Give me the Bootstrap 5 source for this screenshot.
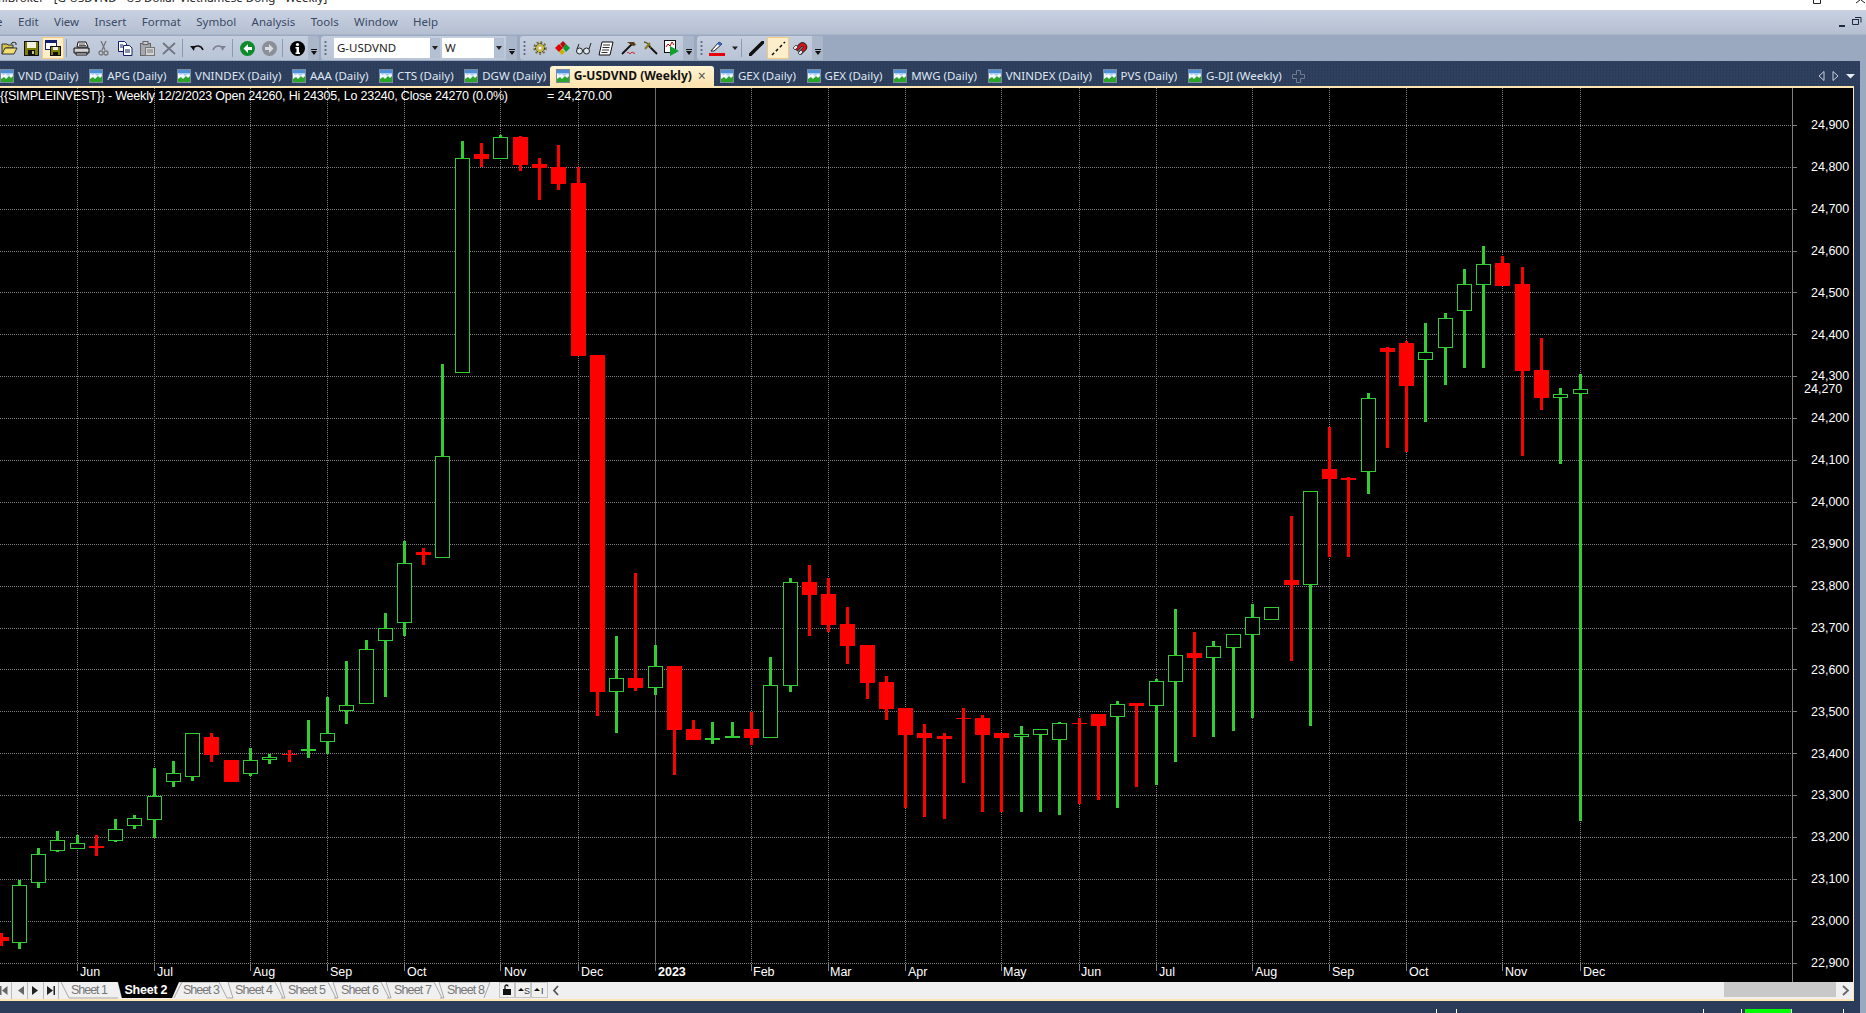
<!DOCTYPE html>
<html lang="en">
<head>
<meta charset="utf-8">
<title>AmiBroker - G-USDVND</title>
<link href="https://cdn.jsdelivr.net/npm/bootstrap@5.3.0/dist/css/bootstrap.min.css" rel="stylesheet">
<style>
html,body{height:1013px;margin:0;background:#9ba9c0;overflow:hidden}
.ab-app{width:1866px;height:1013px;overflow:hidden;position:relative;font-family:"Noto Sans","Liberation Sans",sans-serif;font-size:11.5px;line-height:1}
.ab-title{height:10px;background:#fff;overflow:hidden;position:relative;color:#222;font-size:11.5px;white-space:nowrap}
.ab-title-text{margin-top:-8px;margin-left:-6px}
.ab-title-gap{margin:0 3px}
.ab-winbtn{position:absolute;top:0;left:1806px}
.ab-menu{height:25px;background:linear-gradient(#c8d2e1,#b5bfd2);color:#3a4a66;border-bottom:1px solid #a9b5c9;font-size:11.5px}
.ab-menu-item{margin-right:15.400px}
.ab-menu-first{width:18px;overflow:hidden;flex:none;text-indent:-16px;white-space:nowrap}
.ab-tools{height:26px;background:#9ba9c0;padding-top:1px}
.ab-bar{height:24px;background:linear-gradient(#c4cede,#b9c4d6);border-radius:3px;margin-right:3px}
.ab-bar-a{width:320px;margin-left:-2px}
.ab-bar-b{width:196px}
.ab-bar-c{width:174px}
.ab-bar-d{width:126px;margin-right:0}
.ab-btn{width:22px;height:22px;flex:none;border:1px solid transparent}
.ab-btn-on{background:#fdeecb;border-color:#f2c983}
.ab-sep{width:6px;flex:none;position:relative;height:20px}
.ab-sep::after{content:"";position:absolute;left:2px;top:1px;bottom:1px;width:1px;background:#8c99b0}
.ab-grip{width:9px;flex:none;height:16px;background:radial-gradient(circle,#5d6b85 1px,transparent 1.2px) center top/3px 4px repeat-y}
.ab-cap{width:11px;height:24px;background:#aab6ca;border-radius:0 3px 3px 0;flex:none;position:relative;margin-left:auto}
.ab-cap::before{content:"";position:absolute;left:3px;bottom:10px;width:6px;border-top:1px solid #111}
.ab-cap::after{content:"";position:absolute;left:3px;bottom:5px;border:3px solid transparent;border-top:4px solid #111;border-bottom:0}
.ab-combo{background:#fff;height:20px;color:#222;font-size:11.5px;flex:none;padding-left:3px}
.ab-combo-sym{width:96px}
.ab-combo-per{width:52px}
.ab-drop{width:10px;height:20px;flex:none;background:#b3bfd2;position:relative;margin-right:2px}
.ab-drop::after{content:"";position:absolute;left:2px;top:8px;border:3px solid transparent;border-top:4px solid #222;border-bottom:0}
.ab-work{width:1860px;background:#2b3c5a}
.ab-side{width:6px;background:#9ba9c0}
.ab-tabs{height:25px;background:#2d3f5e repeating-conic-gradient(#2b3c5a 0 25%,#30425f 0 50%) 0 0/3px 3px;color:#dfe6f2}
.ab-tab{margin-right:10.600px;height:20px;margin-top:5px;white-space:nowrap}
.ab-tab svg{margin-right:4px;flex:none}
.ab-tab-on{background:linear-gradient(#fff4d6,#fde3ae);color:#111;font-weight:700;font-size:12px;border-radius:3px 3px 0 0;padding:0 8px 0 6px;margin-left:-7px;margin-right:6px;height:20px}
.ab-tab-x{color:#555;margin-left:6px;font-weight:400;font-size:14px}
.ab-tabnav{margin-left:auto;margin-right:5px;margin-top:5px;gap:7px}
.ab-window{width:1854px;border-top:2px solid #fde6b4;border-right:1px solid #fde6b4;border-bottom:2px solid #fde6b4;background:#000}
.ab-chart{display:block}
.ab-strip{height:17px;background:#f0f0f0}
.ab-strip svg{display:block}
.ab-thumb{width:112px;height:15px;background:#c8c8c8;margin-left:auto;margin-right:2px}
.ab-arrow{width:15px;color:#666;flex:none}
.ab-status{height:12px;display:block}
.ab-defs{top:0;left:0}
svg text{font-family:"Liberation Sans",Arial,sans-serif}
</style>
</head>
<body>
<div class="ab-app d-flex flex-column">

  <svg width="0" height="0" class="ab-defs position-absolute" aria-hidden="true">
    <symbol id="abIco" viewBox="0 0 14 14">
      <rect x=".5" y=".5" width="13" height="13" fill="#f2f7fc" stroke="#7d8ba0"/>
      <rect x="1" y="1" width="12" height="3" fill="#4f8fd8"/>
      <path d="M1 4l2 2 3-1 2 2 3-2 2 1V4z" fill="#a9cdf0"/>
      <path d="M1 13v-3l3-2 2 2 3-3 2 2 2-2v6z" fill="#2aa52a"/>
    </symbol>
  </svg>

  <div class="ab-title">
    <div class="ab-title-text">miBroker<span class="ab-title-gap">-</span>[G-USDVND - US Dollar Vietnamese Dong - Weekly]</div>
    <svg class="ab-winbtn" width="60" height="10" aria-hidden="true"><path d="M7.500 0v3.500h7V0" fill="none" stroke="#222"/><path d="M50 3l4-3M59 3l-4-3" stroke="#222" fill="none"/></svg>
  </div>

  <nav class="ab-menu d-flex align-items-center">
    <span class="ab-menu-first">File</span>
    <span class="ab-menu-item">Edit</span>
    <span class="ab-menu-item">View</span>
    <span class="ab-menu-item">Insert</span>
    <span class="ab-menu-item">Format</span>
    <span class="ab-menu-item">Symbol</span>
    <span class="ab-menu-item">Analysis</span>
    <span class="ab-menu-item">Tools</span>
    <span class="ab-menu-item">Window</span>
    <span class="ab-menu-item">Help</span>
    <svg class="ms-auto me-1" width="24" height="14" aria-hidden="true"><rect x="1" y="10" width="6" height="2" fill="#1d2a44"/><path d="M14.500 4.500h6v5h-6zM17 2.500h6v5" fill="none" stroke="#1d2a44"/><path d="M14 4.500h7M17 2.500h6" stroke="#1d2a44"/></svg>
  </nav>

  <div class="ab-tools d-flex">
    <div class="ab-bar ab-bar-a d-flex align-items-center">
      <span class="ab-btn d-flex align-items-center justify-content-center"><svg width="17" height="15" viewBox="0 0 17 15"><path d="M1 3h5l1 1h5v3H5L1 13z" fill="#d9c34a" stroke="#333"/><path d="M1 13l3-6h12l-3 6z" fill="#f1df72" stroke="#333"/><path d="M10 3c1-2 3-2 5-1M15 2v2" stroke="#222" fill="none"/></svg></span>
      <span class="ab-btn d-flex align-items-center justify-content-center"><svg width="15" height="15" viewBox="0 0 15 15"><rect x=".5" y=".5" width="14" height="14" fill="#808000" stroke="#111"/><rect x="3" y="1" width="9" height="6" fill="#f1f1e4"/><rect x="4" y="9" width="7" height="5" fill="#111"/><rect x="8" y="10" width="2" height="3" fill="#c9c98a"/></svg></span>
      <span class="ab-btn ab-btn-on d-flex align-items-center justify-content-center"><svg width="16" height="16" viewBox="0 0 16 16"><rect x=".5" y=".5" width="11" height="9" fill="#fff" stroke="#12206b"/><rect x="1" y="1" width="10" height="2" fill="#12206b"/><rect x="5.500" y="6.500" width="10" height="9" fill="#808000" stroke="#111"/><rect x="8" y="7" width="5" height="3" fill="#eee"/><rect x="8" y="12" width="5" height="3" fill="#111"/></svg></span>
      <span class="ab-sep"></span>
      <span class="ab-btn d-flex align-items-center justify-content-center"><svg width="17" height="15" viewBox="0 0 17 15"><path d="M5 1h8l2 5H4z" fill="#fff" stroke="#111"/><path d="M6 3h6M6 4.500h7" stroke="#555"/><path d="M1 7h15v5H1z" fill="#b9b9b9" stroke="#111"/><path d="M3 12h11v2H3z" fill="#fff" stroke="#111"/><path d="M2 9h13" stroke="#eee"/></svg></span>
      <span class="ab-btn d-flex align-items-center justify-content-center"><svg width="11" height="15" viewBox="0 0 11 15"><path d="M3 0l4 9M8 0L4 9" stroke="#777" fill="none" stroke-width="1.300"/><circle cx="3" cy="12" r="2" fill="none" stroke="#777" stroke-width="1.300"/><circle cx="8" cy="12" r="2" fill="none" stroke="#777" stroke-width="1.300"/></svg></span>
      <span class="ab-btn d-flex align-items-center justify-content-center"><svg width="16" height="15" viewBox="0 0 16 15"><path d="M1.500.5h6l2 2v8h-8z" fill="#fff" stroke="#12206b"/><path d="M6.500 4.500h6l2.500 2.500v7.500H6.500z" fill="#fff" stroke="#12206b"/><path d="M8 9h5M8 11h5M3 4h3M3 6h3" stroke="#12206b"/></svg></span>
      <span class="ab-btn d-flex align-items-center justify-content-center"><svg width="16" height="15" viewBox="0 0 16 15"><rect x="1.500" y="2.500" width="10" height="12" fill="#a5a9ad" stroke="#666"/><rect x="4" y=".5" width="5" height="3" fill="#c9c9c9" stroke="#666"/><rect x="6.500" y="6.500" width="9" height="8" fill="#d2d4d8" stroke="#777"/><path d="M8 9h6M8 11h6" stroke="#777"/></svg></span>
      <span class="ab-btn d-flex align-items-center justify-content-center"><svg width="14" height="13" viewBox="0 0 14 13"><path d="M1 1l12 11M13 1L1 12" stroke="#707682" stroke-width="1.800"/></svg></span>
      <span class="ab-sep"></span>
      <span class="ab-btn d-flex align-items-center justify-content-center"><svg width="14" height="10" viewBox="0 0 14 10"><path d="M3 5c3-3 8-3 10 2" fill="none" stroke="#111" stroke-width="1.600"/><path d="M0 3l5 0-1 5z" fill="#111"/></svg></span>
      <span class="ab-btn d-flex align-items-center justify-content-center"><svg width="14" height="10" viewBox="0 0 14 10"><path d="M11 5C8 2 3 2 1 7" fill="none" stroke="#7b8190" stroke-width="1.600"/><path d="M14 3l-5 0 1 5z" fill="#7b8190"/></svg></span>
      <span class="ab-sep"></span>
      <span class="ab-btn d-flex align-items-center justify-content-center"><svg width="15" height="15" viewBox="0 0 15 15"><circle cx="7.500" cy="7.500" r="7.500" fill="#0d8a2a"/><path d="M8 3L3.500 7.500 8 12V9h4V6H8z" fill="#fff"/></svg></span>
      <span class="ab-btn d-flex align-items-center justify-content-center"><svg width="15" height="15" viewBox="0 0 15 15"><circle cx="7.500" cy="7.500" r="7.500" fill="#8a8f98"/><path d="M7 3l4.500 4.500L7 12V9H3V6h4z" fill="#d8dce3"/></svg></span>
      <span class="ab-sep"></span>
      <span class="ab-btn d-flex align-items-center justify-content-center"><svg width="15" height="15" viewBox="0 0 15 15"><circle cx="7.500" cy="7.500" r="7.500" fill="#000"/><circle cx="7.500" cy="3.500" r="1.600" fill="#fff"/><path d="M5.500 6h3.500v5.500h1V13H5.500v-1.500h1V7.500h-1z" fill="#fff"/></svg></span>
      <span class="ab-cap"></span>
    </div>

    <div class="ab-bar ab-bar-b d-flex align-items-center">
      <span class="ab-grip"></span>
      <span class="ab-combo ab-combo-sym d-flex align-items-center ms-1">G-USDVND</span>
      <span class="ab-drop"></span>
      <span class="ab-combo ab-combo-per d-flex align-items-center">W</span>
      <span class="ab-drop"></span>
      <span class="ab-cap"></span>
    </div>

    <div class="ab-bar ab-bar-c d-flex align-items-center">
      <span class="ab-grip"></span>
      <span class="ab-btn d-flex align-items-center justify-content-center"><svg width="14" height="14" viewBox="0 0 14 14"><circle cx="7" cy="7" r="4.500" fill="#c7b94a" stroke="#222" stroke-dasharray="2 1"/><circle cx="7" cy="7" r="6" fill="none" stroke="#6d6a23" stroke-dasharray="2 2" stroke-width="1.500"/><circle cx="7" cy="7" r="1.500" fill="#fff"/></svg></span>
      <span class="ab-btn d-flex align-items-center justify-content-center"><svg width="15" height="14" viewBox="0 0 15 14"><path d="M4 3l4 4-4 4-4-4z" fill="#e00000"/><path d="M8 0l3 3-3 4-3-4z" fill="#b01010"/><path d="M11 3l4 4-4 4-3-4z" fill="#0b9a2c"/><path d="M7 8l3 3-3 3-3-3z" fill="#c9b300"/></svg></span>
      <span class="ab-btn d-flex align-items-center justify-content-center"><svg width="16" height="13" viewBox="0 0 16 13"><circle cx="3.500" cy="9" r="3" fill="#dfe7f0" stroke="#222"/><circle cx="10.500" cy="9" r="3" fill="#dfe7f0" stroke="#222"/><path d="M6.500 8.500c1-1 1-1 1-1M1 7l2-5M13 7l2-6" stroke="#222" fill="none"/></svg></span>
      <span class="ab-btn d-flex align-items-center justify-content-center"><svg width="16" height="15" viewBox="0 0 16 15"><path d="M4 1h11l-3 13H1z" fill="#fff" stroke="#111"/><path d="M5 4h7M4.500 6.500h7M4 9h7M3.500 11.500h6" stroke="#333"/></svg></span>
      <span class="ab-btn d-flex align-items-center justify-content-center"><svg width="16" height="15" viewBox="0 0 16 15"><path d="M12 3L2 13" stroke="#111" stroke-width="1.800"/><path d="M7 1h7l2 3-3 1z" fill="#5a3a12"/><path d="M7 12c2-2 2 2 4 0s2 1 4 0" stroke="#d00000" fill="none"/></svg></span>
      <span class="ab-btn d-flex align-items-center justify-content-center"><svg width="15" height="14" viewBox="0 0 15 14"><path d="M5 4l9 9" stroke="#111" stroke-width="1.800"/><path d="M1 1c3 0 6 3 7 6L6 3z" fill="#8a7a20" stroke="#5b5212"/><path d="M2 8l5-6" stroke="#8a7a20" stroke-width="2"/></svg></span>
      <span class="ab-btn d-flex align-items-center justify-content-center"><svg width="16" height="16" viewBox="0 0 16 16"><rect x=".5" y=".5" width="11" height="12" fill="#fff" stroke="#111"/><path d="M2 7l2-3 2 2 2-4 2 3" fill="none" stroke="#c00"/><path d="M6 6l9 5-9 5z" fill="#12a02e"/></svg></span>
      <span class="ab-cap"></span>
    </div>

    <div class="ab-bar ab-bar-d d-flex align-items-center">
      <span class="ab-grip"></span>
      <span class="ab-btn d-flex align-items-center justify-content-center"><svg width="16" height="15" viewBox="0 0 16 15"><path d="M2 10L10 1l3 2-8 7z" fill="#fff" stroke="#222"/><path d="M10 1l3 2-2 2-3-2z" fill="#3a6bd0"/><rect y="12" width="16" height="3" fill="#e8000d"/></svg></span>
      <span class="d-flex align-items-center ps-1"><svg width="7" height="5"><path d="M0 .5h6L3 4z" fill="#222"/></svg></span>
      <span class="ab-sep"></span>
      <span class="ab-btn d-flex align-items-center justify-content-center"><svg width="15" height="15" viewBox="0 0 15 15"><path d="M1 14L14 1" stroke="#111" stroke-width="3.400" stroke-linecap="round"/></svg></span>
      <span class="ab-btn ab-btn-on d-flex align-items-center justify-content-center"><svg width="15" height="15" viewBox="0 0 15 15"><path d="M1 14L14 1" stroke="#111" stroke-width="1.500" stroke-dasharray="3 2.500"/></svg></span>
      <span class="ab-btn d-flex align-items-center justify-content-center"><svg width="16" height="16" viewBox="0 0 16 16"><path d="M4 10l5-5a2.500 2.500 0 0 1 3.500 3.500L7.500 13.500" fill="none" stroke="#222" stroke-width="4.400"/><path d="M4.500 9.500L9 5a2.500 2.500 0 0 1 3.500 3.500L8 13" fill="none" stroke="#d0141c" stroke-width="2.800"/><path d="M1 8l3-3 2 2-3 3zM6 13l3-3 2 2-3 3z" fill="#e6e6e6" stroke="#222" stroke-width=".7"/></svg></span>
      <span class="ab-cap"></span>
    </div>
  </div>

  <div class="d-flex flex-grow-1">
    <main class="ab-work d-flex flex-column">
      <div class="ab-tabs d-flex">
        <span class="ab-tab d-flex align-items-center"><svg width="14" height="14"><use href="#abIco"/></svg>VND (Daily)</span>
        <span class="ab-tab d-flex align-items-center"><svg width="14" height="14"><use href="#abIco"/></svg>APG (Daily)</span>
        <span class="ab-tab d-flex align-items-center"><svg width="14" height="14"><use href="#abIco"/></svg>VNINDEX (Daily)</span>
        <span class="ab-tab d-flex align-items-center"><svg width="14" height="14"><use href="#abIco"/></svg>AAA (Daily)</span>
        <span class="ab-tab d-flex align-items-center"><svg width="14" height="14"><use href="#abIco"/></svg>CTS (Daily)</span>
        <span class="ab-tab d-flex align-items-center"><svg width="14" height="14"><use href="#abIco"/></svg>DGW (Daily)</span>
        <span class="ab-tab ab-tab-on d-flex align-items-center"><svg width="14" height="14"><use href="#abIco"/></svg>G-USDVND (Weekly)<span class="ab-tab-x">×</span></span>
        <span class="ab-tab d-flex align-items-center"><svg width="14" height="14"><use href="#abIco"/></svg>GEX (Daily)</span>
        <span class="ab-tab d-flex align-items-center"><svg width="14" height="14"><use href="#abIco"/></svg>GEX (Daily)</span>
        <span class="ab-tab d-flex align-items-center"><svg width="14" height="14"><use href="#abIco"/></svg>MWG (Daily)</span>
        <span class="ab-tab d-flex align-items-center"><svg width="14" height="14"><use href="#abIco"/></svg>VNINDEX (Daily)</span>
        <span class="ab-tab d-flex align-items-center"><svg width="14" height="14"><use href="#abIco"/></svg>PVS (Daily)</span>
        <span class="ab-tab d-flex align-items-center"><svg width="14" height="14"><use href="#abIco"/></svg>G-DJI (Weekly)</span>
        <span class="ab-tab d-flex align-items-center"><svg width="13" height="13" viewBox="0 0 13 13"><path d="M4.500.5h4v4h4v4h-4v4h-4v-4h-4v-4h4z" fill="none" stroke="#6f7b90"/></svg></span>
        <span class="ab-tabnav d-flex align-items-center">
          <svg width="7" height="10"><path d="M6 .5v9L1 5z" fill="none" stroke="#c5d0e2"/></svg>
          <svg width="7" height="10"><path d="M1 .5v9L6 5z" fill="none" stroke="#c5d0e2"/></svg>
          <svg width="9" height="6"><path d="M0 1h9L4.500 5.500z" fill="#e6ebf3"/></svg>
        </span>
      </div>

      <div class="ab-window d-flex flex-column">
        <svg class="ab-chart" id="abChart" width="1853" height="894" viewBox="0 88 1853 894" shape-rendering="crispEdges" role="img" aria-label="G-USDVND weekly candlestick chart"></svg>
        <div class="ab-strip d-flex align-items-start">
          <svg width="560" height="17" viewBox="0 0 560 17">
            <g fill="#222">
              <path d="M0 4h1.500v9H0zM7.500 4v9L2 8.500z" fill="#666"/>
              <path d="M24 4v9l-6-4.500z" fill="#666"/>
              <path d="M32 4v9l6-4.500z"/>
              <path d="M47 4v9l6-4.500zM53.500 4H55v9h-1.500z"/>
            </g>
            <path d="M11.500 0v17M27.500 0v17M43.500 0v17M58.500 0v17" stroke="#bbb"/>
            <g fill="none" stroke="#a8a8a8">
              <path d="M61 0l8 16h49M118 0l4 16"/>
              <path d="M178 0h41l8 16M174 16l8-16"/>
              <path d="M227 16h6l-5-16h47l8 16"/>
              <path d="M281 16h4l-5-16h48l8 16"/>
              <path d="M334 16h4l-5-16h48l8 16"/>
              <path d="M387 16h4l-5-16h48l8 16"/>
              <path d="M440 16h4l-5-16h51l-6 16"/>
            </g>
            <path d="M118 0h61l-7 16h-50z" fill="#000"/>
            <g font-size="12.500" fill="#777">
              <text x="71" y="12" textLength="37">Sheet 1</text>
              <text x="124.500" y="12" textLength="43" font-weight="700" fill="#fff">Sheet 2</text>
              <text x="183" y="12" textLength="37">Sheet 3</text>
              <text x="235" y="12" textLength="38">Sheet 4</text>
              <text x="288" y="12" textLength="38">Sheet 5</text>
              <text x="341" y="12" textLength="38">Sheet 6</text>
              <text x="394" y="12" textLength="38">Sheet 7</text>
              <text x="447" y="12" textLength="38">Sheet 8</text>
            </g>
            <g fill="none" stroke="#c4c4c4"><rect x="499.500" y=".5" width="15" height="15"/><rect x="515.500" y=".5" width="15" height="15"/><rect x="531.500" y=".5" width="16" height="15"/></g>
            <path d="M503 7h8v6h-8z" fill="#111"/><path d="M505 7V4.500c0-2 3-2 3 0" fill="none" stroke="#111" stroke-width="1.300"/>
            <path d="M518 9l3-3 3 3z" fill="#111"/><text x="524" y="12" font-size="9" fill="#333">S</text>
            <path d="M534 9l3-3 3 3z" fill="#111"/><text x="541" y="12" font-size="9" fill="#333">I</text>
            <path d="M558 4l-4 4.500 4 4.500" fill="none" stroke="#555" stroke-width="1.800"/>
          </svg>
          <span class="ab-thumb"></span>
          <svg class="ab-arrow" width="15" height="17"><path d="M5 4l5 4.500-5 4.500" fill="none" stroke="#666" stroke-width="1.800"/></svg>
        </div>
      </div>

      <svg class="ab-status" width="1860" height="12" viewBox="0 1001 1860 12" aria-hidden="true" shape-rendering="crispEdges">
        <path d="M1436.500 1009v4M1456.500 1009v4M1703.500 1009v4M1741.500 1009v4M1791.500 1009v4M1843.500 1009v4" stroke="#fff"/>
        <rect x="1745" y="1009" width="46" height="4" fill="#00ff00"/>
      </svg>
    </main>
    <aside class="ab-side"></aside>
  </div>
</div>

<script>
(function(){
  var NS='http://www.w3.org/2000/svg',svg=document.getElementById('abChart');
  function el(n,a,t){var e=document.createElementNS(NS,n);for(var k in a)e.setAttribute(k,a[k]);if(t)e.textContent=t;svg.appendChild(e);return e;}
  var prices=[24900,24800,24700,24600,24500,24400,24300,24200,24100,24000,23900,23800,23700,23600,23500,23400,23300,23200,23100,23000,22900];
  var grid='#808080';
  prices.forEach(function(p,i){
    var y=Math.floor(125.3+41.9*i)+.5;
    el('line',{x1:0,x2:1792,y1:y,y2:y,stroke:grid,'stroke-dasharray':'1 1'});
    el('line',{x1:1792,x2:1797,y1:y,y2:y,stroke:grid});
  });
  [77,154,250,327,404,500,578,751,828,905,1001,1079,1156,1252,1329,1406,1502,1580].forEach(function(x){
    el('line',{x1:x+.5,x2:x+.5,y1:88,y2:964,stroke:grid,'stroke-dasharray':'1 1'});
    el('line',{x1:x+.5,x2:x+.5,y1:964,y2:971,stroke:grid});
  });
  el('line',{x1:655.5,x2:655.5,y1:88,y2:971,stroke:'#6e6e6e'});
  el('line',{x1:1792.5,x2:1792.5,y1:88,y2:982,stroke:'#808080'});

  var R='#ff0000',G='#32cd32';
  // [centre x, kind (r filled red, g hollow green, f filled green), wick top, wick bottom, body top, body bottom]
  var c=[
  [1,'r',933,946,937,941],[19,'g',880,949,885,942],[38,'g',848,888,854,882],[57,'g',831,852,840,850],
  [77,'g',835,848,843,848],[96,'r',835,856,846,848],[115,'g',819,842,829,840],[134,'g',815,829,818,825],
  [154,'g',768,838,796,819],[173,'g',761,787,773,781],[192,'g',733,781,733,776],[211,'r',733,762,737,755],
  [231,'r',760,782,760,782],[250,'g',748,776,760,773],[269,'g',754,764,757,759],[289,'r',750,762,754,755],
  [308,'f',720,758,749,751],[327,'g',697,754,733,741],[346,'g',661,724,705,710],[366,'g',640,703,649,703],
  [385,'g',613,697,628,640],[404,'g',541,636,563,622],[423,'r',548,565,552,555],[442,'g',364,557,456,557],
  [462,'g',141,372,158,372],[481,'r',143,167,154,159],[500,'g',135,158,137,158],[520,'r',136,171,137,165],
  [539,'r',158,200,164,168],[558,'r',145,190,167,184],[578,'r',167,356,183,356],[597,'r',355,716,355,692],
  [616,'g',636,733,678,691],[635,'r',573,691,678,688],[655,'g',645,695,666,687],[674,'r',666,775,666,730],
  [693,'r',720,740,729,740],[712,'f',722,744,738,740],[732,'f',722,738,736,738],[751,'r',712,745,729,738],
  [770,'g',657,737,685,737],[790,'g',578,692,582,685],[809,'r',565,636,582,595],[828,'r',578,632,594,625],
  [847,'r',607,664,624,646],[867,'r',645,699,645,683],[886,'r',676,720,682,709],[905,'r',708,808,708,735],
  [924,'r',724,817,733,738],[944,'r',733,819,736,739],[963,'r',708,783,718,719],[982,'r',715,812,718,735],
  [1001,'r',733,812,733,738],[1021,'g',726,812,734,736],[1040,'g',729,812,729,734],[1059,'g',722,815,723,739],
  [1079,'r',718,804,723,724],[1098,'r',714,800,714,726],[1117,'g',701,808,704,716],[1136,'r',703,787,703,706],
  [1156,'g',679,785,681,705],[1175,'g',609,762,655,681],[1194,'r',632,737,653,658],[1213,'g',641,737,646,657],
  [1233,'g',634,731,634,647],[1252,'g',604,718,617,634],[1271,'g',607,619,607,619],[1291,'r',516,661,580,585],
  [1310,'g',491,726,491,584],[1329,'r',427,557,469,479],[1348,'r',477,557,478,480],[1368,'g',393,494,398,471],
  [1387,'r',347,448,348,352],[1406,'r',341,452,343,386],[1425,'g',323,422,352,359],[1445,'g',313,385,318,347],
  [1464,'g',269,368,284,310],[1483,'g',246,368,264,284],[1502,'r',256,286,263,286],[1522,'r',267,456,284,371],
  [1541,'r',338,410,370,398],[1560,'g',388,464,394,397],[1580,'g',374,821,389,393]
  ];
  c.forEach(function(d){
    var x=d[0],k=d[1],col=k==='r'?R:G;
    el('rect',{x:x-1,y:d[2],width:3,height:d[3]-d[2],fill:col});
    if(k==='g'){
      el('rect',{x:x-6.5,y:d[4]+.5,width:14,height:d[5]-d[4],fill:'#000',stroke:col});
    }else{
      el('rect',{x:x-7,y:d[4],width:15,height:Math.max(1,d[5]-d[4]),fill:col});
    }
  });

  prices.forEach(function(p,i){
    var y=125.3+41.9*i+3.7,s=String(p);
    el('text',{x:1811,y:y,fill:'#fff','font-size':12.5},s.slice(0,2)+','+s.slice(2));
  });
  el('text',{x:1804,y:393,fill:'#fff','font-size':12.5},'24,270');
  [['Jun',80],['Jul',157],['Aug',253],['Sep',330],['Oct',407],['Nov',504],['Dec',581],['Feb',753],['Mar',830],['Apr',908],['May',1003],['Jun',1081],['Jul',1159],['Aug',1255],['Sep',1332],['Oct',1409],['Nov',1505],['Dec',1583]].forEach(function(m){
    el('text',{x:m[1],y:976,fill:'#fff','font-size':12.5},m[0]);
  });
  el('text',{x:658,y:976,fill:'#fff','font-size':12.5,'font-weight':700},'2023');
  el('text',{x:0,y:100,fill:'#fff','font-size':12.5,textLength:508},'{{SIMPLEINVEST}} - Weekly 12/2/2023 Open 24260, Hi 24305, Lo 23240, Close 24270 (0.0%)');
  el('text',{x:547,y:100,fill:'#fff','font-size':12.5,textLength:65},'= 24,270.00');
})();
</script>
</body>
</html>
